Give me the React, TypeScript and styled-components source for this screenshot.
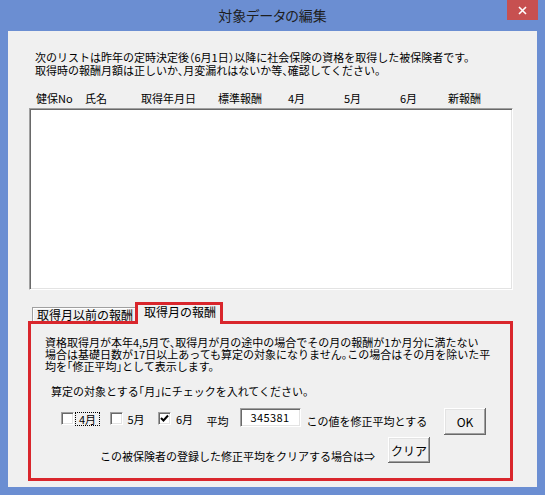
import React from "react";
import styled, { createGlobalStyle } from "styled-components";

const FONT = `"Noto Sans CJK JP", "Noto Sans", sans-serif`;

const GlobalStyle = createGlobalStyle`
  html, body { margin: 0; padding: 0; }
  body { background: #6b8ed2; font-family: ${FONT}; color: #000; }
`;

const sunken = `
  border: 1px solid;
  border-color: #a0a0a0 #ffffff #ffffff #a0a0a0;
  box-shadow: inset 1px 1px 0 #696969, inset -1px -1px 0 #e3e3e3;
  background: #ffffff;
  box-sizing: border-box;
`;

const Window = styled.div`
  width: 545px;
  height: 495px;
  background: #6b8ed2;
  display: flex;
  flex-direction: column;
  font-family: ${FONT};
  font-feature-settings: "halt";
  font-size: 11px;
`;

const TitleBar = styled.div`
  height: 31px;
  flex-shrink: 0;
  display: grid;
  grid-template-columns: 1fr auto 1fr;
  align-items: start;
  padding: 0 7px;
`;

const Title = styled.div`
  grid-column: 2;
  font-size: 14px;
  line-height: 30px;
  color: #1e1e1e;
  white-space: nowrap;
  font-feature-settings: "palt";
`;

const CloseButton = styled.div`
  grid-column: 3;
  justify-self: end;
  width: 31px;
  height: 20px;
  background: #c75050;
  display: flex;
  align-items: center;
  justify-content: center;
`;

const Frame = styled.div`
  flex: 1;
  display: flex;
  padding: 0 8px 8px;
`;

const Client = styled.div`
  flex: 1;
  background: #f0f0f0;
  display: flex;
  flex-direction: column;
  padding-top: 20px;
`;

const Intro = styled.div`
  margin-left: 27px;
  line-height: 13px;
  white-space: nowrap;
`;

const HeaderRow = styled.div`
  display: grid;
  grid-template-columns: 49px 56px 77px 70px 56px 56px 48px auto;
  margin: 15px 0 0 28px;
  line-height: 13px;
  white-space: nowrap;
`;

const ListBox = styled.div`
  ${sunken}
  margin: 3px 0 0 21px;
  width: 484px;
  height: 182px;
`;

const TabArea = styled.div`
  margin: 12px 0 0 20px;
  width: 485px;
  display: flex;
  flex-direction: column;
`;

const TabRow = styled.div`
  display: flex;
  align-items: flex-end;
  height: 19px;
  padding-left: 4px;
`;

const Tab = styled.div<{ $active?: boolean }>`
  box-sizing: border-box;
  font-size: 12px;
  line-height: 12px;
  white-space: nowrap;
  background: #f0f0f0;
  ${(p) =>
    p.$active
      ? `
    width: 88px;
    height: 22px;
    border: 3px solid #d9262c;
    border-bottom: none;
    margin-bottom: -3px;
    padding: 1px 0 0 6px;
    position: relative;
    z-index: 1;
  `
      : `
    width: 103px;
    height: 14px;
    border-top: 1px solid #a0a0a0;
    border-left: 1px solid #a0a0a0;
    box-shadow: inset 1px 1px 0 #ffffff;
    padding: 1px 0 0 4px;
  `}
`;

const Panel = styled.div`
  height: 160px;
  box-sizing: border-box;
  border: 3px solid #d9262c;
  padding: 12px 0 0 14px;
  display: flex;
  flex-direction: column;
`;

const Paragraph = styled.div`
  line-height: 12px;
  white-space: nowrap;
`;

const Instruction = styled.div`
  margin: 13px 0 0 6px;
  line-height: 12px;
  white-space: nowrap;
`;

const CheckRow = styled.div`
  display: flex;
  align-items: flex-start;
  margin: 11px 0 0 16px;
  padding-right: 24px;
`;

const CheckItem = styled.div`
  width: 48.5px;
  height: 15px;
  margin-top: 3px;
  display: flex;
  align-items: center;
  flex-shrink: 0;
`;

const CheckBox = styled.div`
  ${sunken}
  width: 13px;
  height: 13px;
  flex-shrink: 0;
  display: flex;
  align-items: center;
  justify-content: center;
`;

const CheckLabel = styled.span<{ $focused?: boolean }>`
  margin-left: 1px;
  padding: 0 3px;
  border: 1px dotted ${(p) => (p.$focused ? "#000" : "transparent")};
  line-height: 12px;
  white-space: nowrap;
`;

const InlineText = styled.span<{ $ml?: number }>`
  margin: 7px 0 0 ${(p) => p.$ml ?? 0}px;
  line-height: 13px;
  white-space: nowrap;
`;

const ValueInput = styled.div`
  ${sunken}
  margin-left: 11px;
  width: 61px;
  height: 19px;
  flex-shrink: 0;
  line-height: 17px;
  text-align: center;
  letter-spacing: 0.4px;
`;

const Button = styled.div<{ $h: number }>`
  margin-left: auto;
  width: 42px;
  height: ${(p) => p.$h}px;
  flex-shrink: 0;
  box-sizing: border-box;
  background: #f0f0f0;
  box-shadow: inset -1px -1px 0 #696969, inset 1px 1px 0 #ffffff,
    inset -2px -2px 0 #a0a0a0, inset 2px 2px 0 #e3e3e3;
  display: flex;
  align-items: center;
  justify-content: center;
  font-size: 12px;
  white-space: nowrap;
`;

const ClearRow = styled.div`
  display: flex;
  align-items: flex-start;
  margin: 2px 0 0 55px;
  padding-right: 80px;
`;

const ClearText = styled.span`
  margin-top: 13px;
  line-height: 13px;
  white-space: nowrap;
`;

const headers = ["健保No", "氏名", "取得年月日", "標準報酬", "4月", "5月", "6月", "新報酬"];

const months = [
  { label: "4月", checked: false, focused: true },
  { label: "5月", checked: false, focused: false },
  { label: "6月", checked: true, focused: false },
];

const CheckMark = () => (
  <svg width="9" height="9" viewBox="0 0 9 9">
    <polyline points="1,4 3.5,6.5 8,1.5" fill="none" stroke="#000" strokeWidth="2" />
  </svg>
);

const CloseIcon = () => (
  <svg width="9" height="9" viewBox="0 0 9 9">
    <path d="M1 1 L8 8 M8 1 L1 8" stroke="#fff" strokeWidth="1.6" />
  </svg>
);

export default function App() {
  return (
    <>
      <GlobalStyle />
      <Window>
        <TitleBar>
          <Title>対象データの編集</Title>
          <CloseButton>
            <CloseIcon />
          </CloseButton>
        </TitleBar>
        <Frame>
          <Client>
            <Intro>
              次のリストは昨年の定時決定後（6月1日）以降に社会保険の資格を取得した被保険者です。
              <br />
              取得時の報酬月額は正しいか、月変漏れはないか等、確認してください。
            </Intro>
            <HeaderRow>
              {headers.map((h) => (
                <span key={h}>{h}</span>
              ))}
            </HeaderRow>
            <ListBox />
            <TabArea>
              <TabRow>
                <Tab>取得月以前の報酬</Tab>
                <Tab $active>取得月の報酬</Tab>
              </TabRow>
              <Panel>
                <Paragraph>
                  資格取得月が本年4,5月で、取得月が月の途中の場合でその月の報酬が1か月分に満たない
                  <br />
                  場合は基礎日数が17日以上あっても算定の対象になりません。この場合はその月を除いた平
                  <br />
                  均を「修正平均」として表示します。
                </Paragraph>
                <Instruction>算定の対象とする「月」にチェックを入れてください。</Instruction>
                <CheckRow>
                  {months.map((m) => (
                    <CheckItem key={m.label}>
                      <CheckBox>{m.checked && <CheckMark />}</CheckBox>
                      <CheckLabel $focused={m.focused}>{m.label}</CheckLabel>
                    </CheckItem>
                  ))}
                  <InlineText>平均</InlineText>
                  <ValueInput>345381</ValueInput>
                  <InlineText $ml={6}>この値を修正平均とする</InlineText>
                  <Button $h={27}>OK</Button>
                </CheckRow>
                <ClearRow>
                  <ClearText>この被保険者の登録した修正平均をクリアする場合は⇒</ClearText>
                  <Button $h={26}>クリア</Button>
                </ClearRow>
              </Panel>
            </TabArea>
          </Client>
        </Frame>
      </Window>
    </>
  );
}
